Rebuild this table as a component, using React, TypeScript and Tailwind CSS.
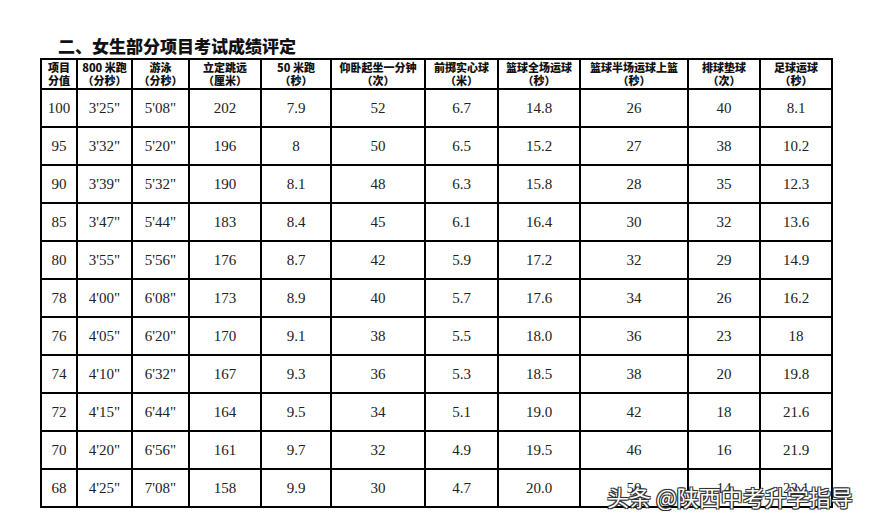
import React from "react";

const headers: [string, string][] = [
  ["项目", "分值"],
  ["800 米跑", "（分秒）"],
  ["游泳", "（分秒）"],
  ["立定跳远", "（厘米）"],
  ["50 米跑", "（秒）"],
  ["仰卧起坐一分钟", "（次）"],
  ["前掷实心球", "（米）"],
  ["篮球全场运球", "（秒）"],
  ["篮球半场运球上篮", "（秒）"],
  ["排球垫球", "（次）"],
  ["足球运球", "（秒）"],
];

const widths = [36, 55, 57, 72, 70, 94, 73, 82, 108, 72, 72];

const rows: string[][] = [
  ["100", "3'25\"", "5'08\"", "202", "7.9", "52", "6.7", "14.8", "26", "40", "8.1"],
  ["95", "3'32\"", "5'20\"", "196", "8", "50", "6.5", "15.2", "27", "38", "10.2"],
  ["90", "3'39\"", "5'32\"", "190", "8.1", "48", "6.3", "15.8", "28", "35", "12.3"],
  ["85", "3'47\"", "5'44\"", "183", "8.4", "45", "6.1", "16.4", "30", "32", "13.6"],
  ["80", "3'55\"", "5'56\"", "176", "8.7", "42", "5.9", "17.2", "32", "29", "14.9"],
  ["78", "4'00\"", "6'08\"", "173", "8.9", "40", "5.7", "17.6", "34", "26", "16.2"],
  ["76", "4'05\"", "6'20\"", "170", "9.1", "38", "5.5", "18.0", "36", "23", "18"],
  ["74", "4'10\"", "6'32\"", "167", "9.3", "36", "5.3", "18.5", "38", "20", "19.8"],
  ["72", "4'15\"", "6'44\"", "164", "9.5", "34", "5.1", "19.0", "42", "18", "21.6"],
  ["70", "4'20\"", "6'56\"", "161", "9.7", "32", "4.9", "19.5", "46", "16", "21.9"],
  ["68", "4'25\"", "7'08\"", "158", "9.9", "30", "4.7", "20.0", "50", "14", "22.1"],
];

export default function App() {
  return (
    <div className="relative w-[870px] h-[524px] overflow-hidden bg-white">
      <div className="pt-[36px] pl-[58px] text-[17px] leading-[20px] font-black text-[#111] [font-family:'Noto_Sans_CJK_SC',sans-serif]">
        二、女生部分项目考试成绩评定
      </div>
      <table className="ml-[40px] mt-[2px] border-collapse table-fixed border-2 border-black">
        <colgroup>
          {widths.map((w, i) => (
            <col key={i} style={{ width: w }} />
          ))}
        </colgroup>
        <thead>
          <tr className="h-[30px]">
            {headers.map(([a, b], i) => (
              <th
                key={i}
                className="border-2 border-black p-0 align-middle text-center text-[11px] leading-[13px] font-black text-[#111] [font-family:'Noto_Sans_CJK_SC',sans-serif] whitespace-nowrap"
              >
                <div>{a}</div>
                <div>{b}</div>
              </th>
            ))}
          </tr>
        </thead>
        <tbody>
          {rows.map((r, ri) => (
            <tr key={ri} className="h-[38px]">
              {r.map((c, ci) => (
                <td
                  key={ci}
                  className="border-2 border-black p-0 align-middle text-center text-[15px] text-[#222] [font-family:'Liberation_Serif',serif]"
                >
                  {c}
                </td>
              ))}
            </tr>
          ))}
        </tbody>
      </table>
      <div className="absolute left-[607px] top-[482px] text-[22px] leading-[28px] text-white [font-family:'Noto_Sans_CJK_SC',sans-serif] [text-shadow:-1px_-1px_0_#333,1px_-1px_0_#333,-1px_1px_0_#333,1px_1px_0_#333,0_0_2px_#000]">
        头条 @陕西中考升学指导
      </div>
    </div>
  );
}
